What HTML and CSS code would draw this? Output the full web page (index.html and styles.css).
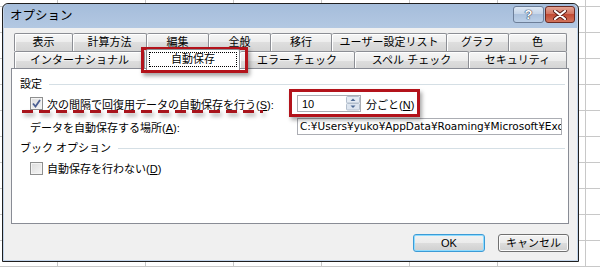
FILE: index.html
```html
<!DOCTYPE html>
<html>
<head>
    <title>オプション</title>
    <meta charset="utf-8">
    <link rel="stylesheet" href="styles.css">
</head>
<body>
    <div class="window">
        <div class="titlebar">
            <span class="title">オプション</span>
            <div class="caption-buttons">
                <span class="cap-btn help">?</span>
                <span class="cap-btn close">
                    <svg width="14" height="10" viewBox="0 0 14 10">
                        <path d="M2 1 L12 9 M12 1 L2 9" stroke="#5a1d17" stroke-width="4" stroke-linecap="round"/>
                        <path d="M2 1 L12 9 M12 1 L2 9" stroke="#fff" stroke-width="2.2" stroke-linecap="round"/>
                    </svg>
                </span>
            </div>
        </div>
        <div class="dialog">
            <div class="tabs tabs-top">
                <span class="tab">表示</span>
                <span class="tab">計算方法</span>
                <span class="tab">編集</span>
                <span class="tab">全般</span>
                <span class="tab">移行</span>
                <span class="tab">ユーザー設定リスト</span>
                <span class="tab">グラフ</span>
                <span class="tab">色</span>
            </div>
            <div class="tabs tabs-bottom">
                <span class="tab">インターナショナル</span>
                <span class="tab active"><span class="focus">自動保存</span></span>
                <span class="tab">エラー チェック</span>
                <span class="tab">スペル チェック</span>
                <span class="tab">セキュリティ</span>
            </div>
            <div class="panel">
                <div class="group-head">設定</div>
                <div class="form-grid">
                    <label class="check">
                        <span class="box">
                            <svg width="9" height="9" viewBox="0 0 9 9">
                                <path d="M1 4.5 L3.5 7.5 L8 1" fill="none" stroke="#4b5f92" stroke-width="1.8"/>
                            </svg>
                        </span>
                        <span>次の間隔で回復用データの自動保存を行う(<u>S</u>):</span>
                    </label>
                    <div class="spin-row">
                        <div class="spin">
                            <span class="spin-value">10</span>
                            <span class="spin-arrows">
                                <svg width="14" height="15" viewBox="0 0 14 15">
                                    <rect x="0.5" y="0.5" width="13" height="6.5" rx="1" fill="#e4ebf3" stroke="#b3bfcd"/>
                                    <rect x="0.5" y="7.5" width="13" height="6.5" rx="1" fill="#dde5ef" stroke="#b3bfcd"/>
                                    <path d="M4.5 5 L7 2.5 L9.5 5 Z" fill="#4d6a94"/>
                                    <path d="M4.5 9.5 L7 12 L9.5 9.5 Z" fill="#4d6a94"/>
                                </svg>
                            </span>
                        </div>
                        <span>分ごと(<u>N</u>)</span>
                    </div>
                    <span class="field-label">データを自動保存する場所(<u>A</u>):</span>
                    <div class="path">C:¥Users¥yuko¥AppData¥Roaming¥Microsoft¥Exc</div>
                </div>
                <div class="group-head second">ブック オプション</div>
                <label class="check single">
                    <span class="box"></span>
                    <span>自動保存を行わない(<u>D</u>)</span>
                </label>
            </div>
            <div class="actions">
                <button class="btn default">OK</button>
                <button class="btn">キャンセル</button>
            </div>
        </div>
    </div>
    <div class="mark mark-tab"></div>
    <div class="mark mark-spin"></div>
    <div class="mark-dash"></div>
</body>
</html>
```

FILE: styles.css
```css
body {
    margin: 0;
    padding: 3px 0 0 2px;
    width: 600px;
    height: 267px;
    box-sizing: border-box;
    overflow: hidden;
    position: relative;
    font-family: "Liberation Sans", "Noto Sans CJK JP", sans-serif;
    font-size: 11px;
    color: #000;
    background-color: #fff;
    background-image: linear-gradient(to right, #c8c8c8 1px, transparent 1px),
        linear-gradient(to bottom, #c8c8c8 1px, transparent 1px);
    background-size: 88px 26px;
    background-position: 57px 6px;
}
.window {
    width: 577px;
    height: 259px;
    box-sizing: border-box;
    border: 1px solid #1f1f1f;
    border-radius: 6px 6px 0 0;
    background: #c2d4ea;
    padding: 0 1px 1px 1px;
    display: flex;
    flex-direction: column;
}
.titlebar {
    height: 24px;
    display: flex;
    align-items: flex-start;
    justify-content: space-between;
    padding: 0 2px 0 6px;
    background: linear-gradient(to bottom, #a5bddb, #b3c8e2);
    border-radius: 5px 5px 0 0;
}
.title {
    font-size: 12.5px;
    line-height: 22px;
    margin-top: 1px;
}
.caption-buttons {
    display: flex;
    gap: 1px;
    margin-top: 2px;
}
.cap-btn {
    height: 17px;
    box-sizing: border-box;
    border-radius: 3px;
    display: flex;
    align-items: center;
    justify-content: center;
}
.help {
    width: 31px;
    border: 1px solid #6d7f99;
    background: linear-gradient(to bottom, #dfe9f5, #c3d3e7 50%, #adc2dd 50%, #bcd0e8);
    color: #fff;
    font-weight: bold;
    font-size: 13px;
    text-shadow: 0 0 1px #2e3f58, 0 0 1px #2e3f58, 0 0 1px #2e3f58;
}
.close {
    width: 30px;
    border: 1px solid #6b2a22;
    background: linear-gradient(to bottom, #e4a493, #d0705d 50%, #c24a34 50%, #d1745c);
}
.dialog {
    flex: 1;
    background: #f0f0f0;
    padding: 5px 8px 8px 7px;
    display: flex;
    flex-direction: column;
}
.tabs {
    display: grid;
    margin: 0 1px 0 3px;
}
.tabs-top {
    grid-template-columns: 59px 74px 62px 62px 61px 115px 62px 58px;
    height: 18px;
}
.tabs-bottom {
    grid-template-columns: 131px 95px 115px 114px 98px;
    height: 17px;
}
.tab {
    box-sizing: border-box;
    border: 1px solid #8c8e94;
    border-bottom: none;
    border-left: none;
    border-radius: 2px 2px 0 0;
    background: linear-gradient(to bottom, #f6f6f6, #ececec 50%, #dedede 50%, #d4d4d4);
    box-shadow: inset 1px 1px 0 #fff;
    text-align: center;
    line-height: 17px;
    white-space: nowrap;
}
.tab:first-child {
    border-left: 1px solid #8c8e94;
}
.tab.active {
    background: #fff;
    box-shadow: none;
    border-left: 1px solid #8c8e94;
    margin: -2px 0 -1px 1px;
    position: relative;
    z-index: 1;
    padding: 2px 2px 0 2px;
}
.focus {
    display: block;
    border: 1px dotted #000;
    line-height: 13px;
}
.panel {
    height: 156px;
    box-sizing: border-box;
    border: 1px solid #898c95;
    background: #fff;
    padding: 8px 3px 0 8px;
}
.group-head {
    display: flex;
    align-items: center;
    height: 14px;
    line-height: 14px;
}
.group-head::after {
    content: "";
    flex: 1;
    border-top: 1px solid #d5dfe5;
    margin-left: 7px;
}
.group-head.second {
    margin-top: 6px;
}
.form-grid {
    display: grid;
    grid-template-columns: 267px 265px;
    grid-auto-rows: 17px;
    row-gap: 6px;
    margin: 4px 0 0 10px;
    align-items: center;
}
.check {
    display: flex;
    align-items: center;
    gap: 4px;
    white-space: nowrap;
}
.check.single {
    margin: 5px 0 0 10px;
    height: 16px;
}
.box {
    width: 13px;
    height: 13px;
    box-sizing: border-box;
    border: 1px solid #8e8f8f;
    background: linear-gradient(135deg, #dcdcdc, #f6f6f6);
    box-shadow: inset 0 0 0 1px #f4f4f4;
    display: flex;
    align-items: center;
    justify-content: center;
}
.spin-row {
    display: flex;
    align-items: center;
    gap: 5px;
}
.spin {
    width: 64px;
    height: 17px;
    box-sizing: border-box;
    border: 1px solid #abadb3;
    display: flex;
    justify-content: space-between;
    align-items: center;
    padding: 0 0 0 4px;
}
.spin-arrows {
    display: flex;
}
.field-label {
    white-space: nowrap;
}
.path {
    height: 17px;
    box-sizing: border-box;
    border: 1px solid #abadb3;
    padding: 0 0 0 2px;
    font-family: "DejaVu Sans", sans-serif;
    font-size: 10.5px;
    line-height: 15px;
    white-space: nowrap;
    overflow: hidden;
}
.actions {
    display: flex;
    justify-content: flex-end;
    gap: 13px;
    margin-top: 10px;
}
.btn {
    width: 72px;
    height: 18px;
    padding: 0;
    font-family: "Liberation Sans", "Noto Sans CJK JP", sans-serif;
    font-size: 11px;
    line-height: 16px;
    color: #000;
    border: 1px solid #707070;
    border-radius: 3px;
    background: linear-gradient(to bottom, #f2f2f2, #ebebeb 50%, #dddddd 50%, #cfcfcf);
    box-shadow: inset 0 0 0 1px #fcfcfc;
}
.btn:last-child {
    width: 71px;
}
.btn.default {
    border-color: #3c9bd6;
    box-shadow: inset 0 0 0 1px #8fdcff;
}
.mark {
    position: absolute;
    box-sizing: border-box;
    border: 3px solid #b3131b;
    box-shadow: 2px 3px 4px rgba(0, 0, 0, 0.35);
}
.mark-tab {
    left: 141px;
    top: 47px;
    width: 107px;
    height: 26px;
}
.mark-spin {
    left: 289px;
    top: 89px;
    width: 131px;
    height: 28px;
}
.mark-dash {
    position: absolute;
    left: 22px;
    top: 110px;
    width: 241px;
    height: 3px;
    background: repeating-linear-gradient(to right, #a8141c 0, #a8141c 11px, transparent 11px, transparent 17px);
    filter: drop-shadow(2px 3px 2px rgba(0, 0, 0, 0.35));
}
```
